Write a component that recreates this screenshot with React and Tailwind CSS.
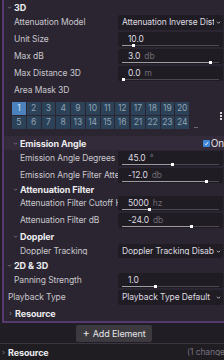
import React from "react";

const Chevron = ({ open = true, className = "" }) => (
  <svg
    className={className}
    width="5"
    height="5"
    viewBox="0 0 10 10"
    fill="none"
    stroke="currentColor"
    strokeWidth="1.6"
  >
    {open ? <path d="M2 3.5l3 3 3-3" /> : <path d="M3.5 2l3 3-3 3" />}
  </svg>
);

const Header = ({ title, indent, h, open = true, className = "", children }) => (
  <div
    className={`flex items-center text-[#ececef] font-bold text-[9px] ${className}`}
    style={{ height: h, paddingLeft: indent }}
  >
    <Chevron open={open} className="text-[#8c8592] mr-[2px]" />
    <span>{title}</span>
    {children}
  </div>
);

const Row = ({ label, indent, h = 17, children }) => (
  <div className="flex items-center" style={{ height: h }}>
    <div
      className="w-[114px] shrink-0 overflow-hidden whitespace-nowrap text-[#c9c5cd]"
      style={{ paddingLeft: indent }}
    >
      {label}
    </div>
    <div className="flex-1 min-w-0 h-full py-[1px] pr-[1px]">{children}</div>
  </div>
);

const Slider = ({ value, unit, pct }) => (
  <div className="h-full bg-[#201c23] rounded-[2px] flex flex-col justify-center pl-[4px] pr-[4px]">
    <div className="pl-[6px] leading-[10px] text-[#dedbe0] whitespace-nowrap">
      {value}
      {unit && <span className="text-[#6f6a74] ml-[4px]">{unit}</span>}
    </div>
    <div className="mt-[1px] h-[1px] bg-[#4c4850] flex items-center">
      <div className="h-[1px] bg-[#9f9ba3]" style={{ width: `${pct}%` }} />
      <div className="w-[3px] h-[3px] bg-white shrink-0" />
    </div>
  </div>
);

const Dropdown = ({ text }) => (
  <div className="h-full bg-[#201c23] rounded-[2px] flex items-center pl-[4px] pr-[2px] text-[#dedbe0] whitespace-nowrap">
    <span className="flex-1 overflow-hidden">{text}</span>
    <Chevron className="text-[#dedbe0] ml-[2px] shrink-0" />
  </div>
);

const MaskGroup = ({ nums }) => (
  <div className="grid grid-cols-4 gap-[1px] w-[58px]">
    {nums.map((n) => (
      <div
        key={n}
        className={`h-[13px] flex items-center justify-center text-[8.5px] ${
          n === 1 ? "bg-[#4b82bd] text-[#d6e4f2]" : "bg-[#2c4258] text-[#8fa2b4]"
        }`}
      >
        {n}
      </div>
    ))}
  </div>
);

export default function App() {
  return (
    <div
      className="w-[224px] h-[360px] overflow-hidden bg-[#211d25] text-[8.5px] tracking-[-0.1px] leading-none flex flex-col"
      style={{ fontFamily: "Inter, 'Noto Sans', sans-serif" }}
    >
      {/* Inspector panel */}
      <div className="ml-[2px] h-[323px] shrink-0 border-l-2 border-b-2 border-[#55396f] bg-[#2a2530] flex flex-col">
        <Header title="3D" indent={3} h={14} />
        <Row label="Attenuation Model" indent={10}>
          <Dropdown text="Attenuation Inverse Dist" />
        </Row>
        <Row label="Unit Size" indent={10}>
          <Slider value="10.0" pct={10} />
        </Row>
        <Row label="Max dB" indent={10}>
          <Slider value="3.0" unit="db" pct={90} />
        </Row>
        <Row label="Max Distance 3D" indent={10}>
          <Slider value="0.0" unit="m" pct={0} />
        </Row>
        <Row label="Area Mask 3D" indent={10} />

        {/* Area mask grid */}
        <div className="flex items-start h-[27px] mt-[3px] pl-[8px]">
          <div className="flex gap-[1px]">
            <MaskGroup nums={[1, 2, 3, 4, 5, 6, 7, 8]} />
            <MaskGroup nums={[9, 10, 11, 12, 13, 14, 15, 16]} />
            <div className="ml-[1px]">
              <MaskGroup nums={[17, 18, 19, 20, 21, 22, 23, 24]} />
            </div>
          </div>
          <div className="self-end ml-[5px] mb-[1px] w-[4px] h-[1px] bg-[#6d6871]" />
          <div className="ml-auto mr-[2px] self-center flex flex-col gap-[1px]">
            <div className="w-[2px] h-[2px] bg-[#d8d5da]" />
            <div className="w-[2px] h-[2px] bg-[#d8d5da]" />
            <div className="w-[2px] h-[2px] bg-[#d8d5da]" />
          </div>
        </div>

        <div className="mt-[7px]">
          <Header title="Emission Angle" indent={9} h={14} className="bg-[#332a3a]">
            <div className="ml-auto flex items-center">
              <div className="w-[7px] h-[7px] rounded-[1px] bg-[#3f86d6] flex items-center justify-center">
                <svg width="5" height="5" viewBox="0 0 10 10" fill="none" stroke="white" strokeWidth="2">
                  <path d="M2 5.5l2 2 4-5" />
                </svg>
              </div>
              <span className="ml-[1px] font-normal text-[#e4e1e6] text-[10px]">On</span>
            </div>
          </Header>
        </div>
        <Row label="Emission Angle Degrees" indent={16}>
          <Slider value="45.0" unit="°" pct={51} />
        </Row>
        <Row label="Emission Angle Filter Attenuation" indent={16}>
          <Slider value="-12.0" unit="db" pct={86} />
        </Row>
        <Header title="Attenuation Filter" indent={9} h={11} />
        <Row label="Attenuation Filter Cutoff Hz" indent={16}>
          <Slider value="5000" unit="hz" pct={27} />
        </Row>
        <Row label="Attenuation Filter dB" indent={16}>
          <Slider value="-24.0" unit="db" pct={70} />
        </Row>
        <Header title="Doppler" indent={9} h={14} />
        <Row label="Doppler Tracking" indent={16} h={16}>
          <Dropdown text="Doppler Tracking Disabled" />
        </Row>
        <Header title="2D & 3D" indent={3} h={13} />
        <Row label="Panning Strength" indent={10}>
          <Slider value="1.0" pct={33} />
        </Row>
        <Row label="Playback Type" indent={4}>
          <Dropdown text="Playback Type Default" />
        </Row>
        <Header title="Resource" indent={4} h={14} open={false} />
      </div>

      {/* Add element */}
      <div className="h-[20px] shrink-0 flex items-center justify-center pl-[4px]">
        <button className="h-[17px] px-[6px] rounded-[2px] bg-[#3c3a3f] text-[#e6e4e8] flex items-center gap-[3px] text-[9px]">
          <span className="text-[11px] leading-none">+</span>
          Add Element
        </button>
      </div>

      {/* Bottom resource row */}
      <div className="flex-1 border-t border-[#3a3540] bg-[#1f1c22] flex items-center">
        <div className="flex items-center pl-[1px] text-[#ececef] font-bold text-[9px]">
          <Chevron open={false} className="text-[#8c8592] mr-[2px]" />
          Resource
        </div>
        <span className="ml-auto text-[#77727c] whitespace-nowrap w-[37px] overflow-hidden">
          (1 change)
        </span>
      </div>
    </div>
  );
}
